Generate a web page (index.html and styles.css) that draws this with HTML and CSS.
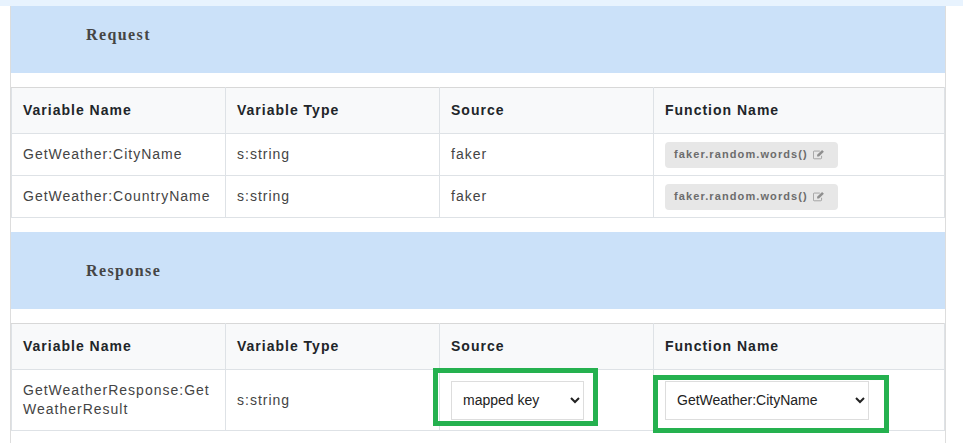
FILE: index.html
```html
<!DOCTYPE html>
<html lang="en">
<head>
    <meta charset="UTF-8">
    <meta name="viewport" content="width=device-width, initial-scale=1.0">
    <title>Mapping</title>
    <link rel="stylesheet" href="styles.css">
</head>
<body>
    <div class="top-strip"></div>
    <div class="panel">
        <div class="section-head section-request">
            <h4>Request</h4>
        </div>
        <table class="vars">
            <thead>
                <tr>
                    <th>Variable Name</th>
                    <th>Variable Type</th>
                    <th>Source</th>
                    <th>Function Name</th>
                </tr>
            </thead>
            <tbody>
                <tr>
                    <td>GetWeather:CityName</td>
                    <td>s:string</td>
                    <td>faker</td>
                    <td>
                        <span class="chip">faker.random.words()
                            <svg class="edit-icon" viewBox="0 0 14 12" width="12" height="11">
                                <path d="M10 7.500V10a1 1 0 0 1-1 1H1.500a1 1 0 0 1-1-1V3a1 1 0 0 1 1-1H8" fill="none" stroke="#999" stroke-width="1"/>
                                <path d="M4.800 6.200 10.600.8l2.100 2L7 8.300H4.800z" fill="#8f8f8f"/>
                            </svg>
                        </span>
                    </td>
                </tr>
                <tr>
                    <td>GetWeather:CountryName</td>
                    <td>s:string</td>
                    <td>faker</td>
                    <td>
                        <span class="chip">faker.random.words()
                            <svg class="edit-icon" viewBox="0 0 14 12" width="12" height="11">
                                <path d="M10 7.500V10a1 1 0 0 1-1 1H1.500a1 1 0 0 1-1-1V3a1 1 0 0 1 1-1H8" fill="none" stroke="#999" stroke-width="1"/>
                                <path d="M4.800 6.200 10.600.8l2.100 2L7 8.300H4.800z" fill="#8f8f8f"/>
                            </svg>
                        </span>
                    </td>
                </tr>
            </tbody>
        </table>

        <div class="section-head section-response">
            <h4>Response</h4>
        </div>
        <table class="vars">
            <thead>
                <tr>
                    <th>Variable Name</th>
                    <th>Variable Type</th>
                    <th>Source</th>
                    <th>Function Name</th>
                </tr>
            </thead>
            <tbody>
                <tr class="row-mapped">
                    <td>GetWeatherResponse:Get<br>WeatherResult</td>
                    <td>s:string</td>
                    <td class="cell-select">
                        <select class="map-select select-source">
                            <option>mapped key</option>
                        </select>
                        <div class="highlight highlight-source"></div>
                    </td>
                    <td class="cell-select">
                        <select class="map-select select-function">
                            <option>GetWeather:CityName</option>
                        </select>
                        <div class="highlight highlight-function"></div>
                    </td>
                </tr>
            </tbody>
        </table>
    </div>
</body>
</html>
```

FILE: styles.css
```css
body {
    margin: 0;
    background: #fff;
    font-family: "Liberation Sans", Arial, sans-serif;
    color: #333;
    height: 100vh;
    overflow: hidden;
}

.top-strip {
    height: 6px;
    background: #e8f3fe;
}

.panel {
    margin-left: 10px;
    width: 934px;
    height: calc(100vh - 6px);
    border-left: 1px solid #ddd;
    border-right: 1px solid #ddd;
}

.section-head {
    background: #cbe1f9;
    padding-left: 75px;
    display: flex;
}

.section-request {
    height: 67px;
    margin-bottom: 14px;
}

.section-response {
    height: 77px;
    margin-top: 14px;
    margin-bottom: 14px;
}

.section-head h4 {
    margin: 0;
    padding-top: 20px;
    font-family: "Liberation Serif", "Times New Roman", serif;
    font-size: 16px;
    line-height: 18px;
    font-weight: bold;
    letter-spacing: 1.4px;
    color: #454545;
}

.section-response h4 {
    padding-top: 30px;
}

.vars {
    width: 934px;
    border-collapse: collapse;
    table-layout: fixed;
    font-size: 14px;
    letter-spacing: 1px;
}

.vars th:nth-child(-n+3) {
    box-sizing: border-box;
    width: 214px;
}

.vars th,
.vars td {
    border: 1px solid #dee2e6;
    padding: 0 0 0 11px;
    text-align: left;
}

.vars th {
    height: 43px;
    padding-bottom: 2px;
    background: #f8f9fa;
    color: #212529;
    font-weight: bold;
    letter-spacing: 1px;
}

.vars thead tr:first-child th {
    border-top: 1px solid #d8d8d8;
}

.vars td {
    height: 41px;
    color: #444;
    line-height: 19px;
}

.chip {
    display: inline-flex;
    align-items: center;
    gap: 5px;
    height: 26px;
    padding: 0 9px;
    width: 173px;
    box-sizing: border-box;
    background: #e7e7e7;
    border-radius: 4px;
    color: #6c6c6c;
    font-size: 11px;
    font-weight: bold;
    letter-spacing: 1.1px;
}

.row-mapped td {
    height: 60px;
}

.cell-select {
    position: relative;
}

.map-select {
    display: block;
    height: 39px;
    background: #fff;
    border: 1px solid #ddd;
    border-radius: 0;
    padding-left: 7px;
    font-family: "Liberation Sans", Arial, sans-serif;
    font-size: 14px;
    color: #222;
}

.select-source {
    width: 133px;
}

.select-function {
    width: 204px;
}

/* green annotation boxes drawn over the screenshot */
.highlight {
    position: absolute;
    box-sizing: border-box;
    border: 5px solid #25b14f;
    pointer-events: none;
}

.highlight-source {
    left: -7px;
    top: -2px;
    width: 165px;
    height: 58px;
}

.highlight-function {
    left: -1px;
    top: 5px;
    width: 236px;
    height: 58px;
}
```
